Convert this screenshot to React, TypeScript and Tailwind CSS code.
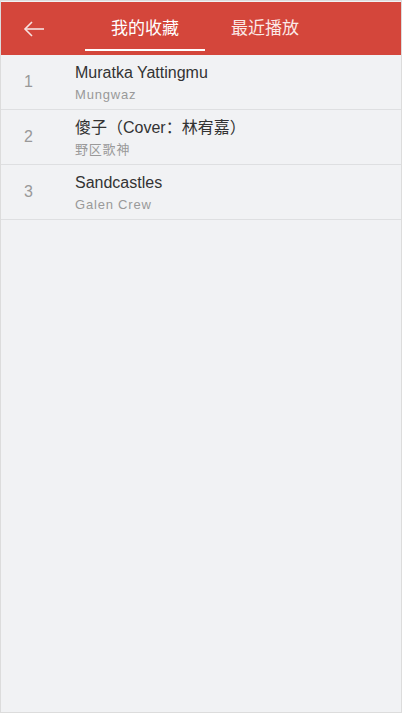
const songs = [
  { title: 'Muratka Yattingmu', artist: 'Mungwaz' },
  { title: '傻子（Cover：林宥嘉）', artist: '野区歌神' },
  { title: 'Sandcastles', artist: 'Galen Crew' },
]

const font = { fontFamily: '"Liberation Sans", "Noto Sans CJK SC", sans-serif' }

export default function App() {
  return (
    <div className="h-[716px] w-[404px] bg-white" style={font}>
      <div className="flex h-[713px] w-[402px] flex-col border border-[#dcdcdc] bg-[#f1f2f4] pt-px">
        <header className="flex h-[53px] items-stretch bg-[#d4463b]">
          <button type="button" className="flex w-[84px] items-center pl-[22px] text-white" aria-label="back">
            <svg width="22" height="16" viewBox="0 0 22 16" fill="none" stroke="#f7e3e1" strokeWidth="1.6">
              <path d="M21 8H2" />
              <path d="M9 1L2 8l7 7" />
            </svg>
          </button>
          <div className="flex">
            <div className="relative flex w-[120px] items-center justify-center text-[17px] text-white">
              我的收藏
              <span className="absolute bottom-[4px] left-0 h-[2px] w-full bg-white" />
            </div>
            <div className="flex w-[120px] items-center justify-center text-[17px] text-[#fbe9e7]">
              最近播放
            </div>
          </div>
        </header>
        <ul>
          {songs.map((s, i) => (
            <li key={s.title} className="flex h-[55px] items-center border-b border-[#dedfe1]">
              <span className="w-[74px] pl-[23px] text-[16px] text-[#999]">{i + 1}</span>
              <div className="flex flex-col pt-px">
                <span className="text-[16px] leading-[20px] text-[#333]">{s.title}</span>
                <span className="mt-[4px] text-[13px] leading-[16px] tracking-[0.8px] text-[#999]">{s.artist}</span>
              </div>
            </li>
          ))}
        </ul>
      </div>
    </div>
  )
}
